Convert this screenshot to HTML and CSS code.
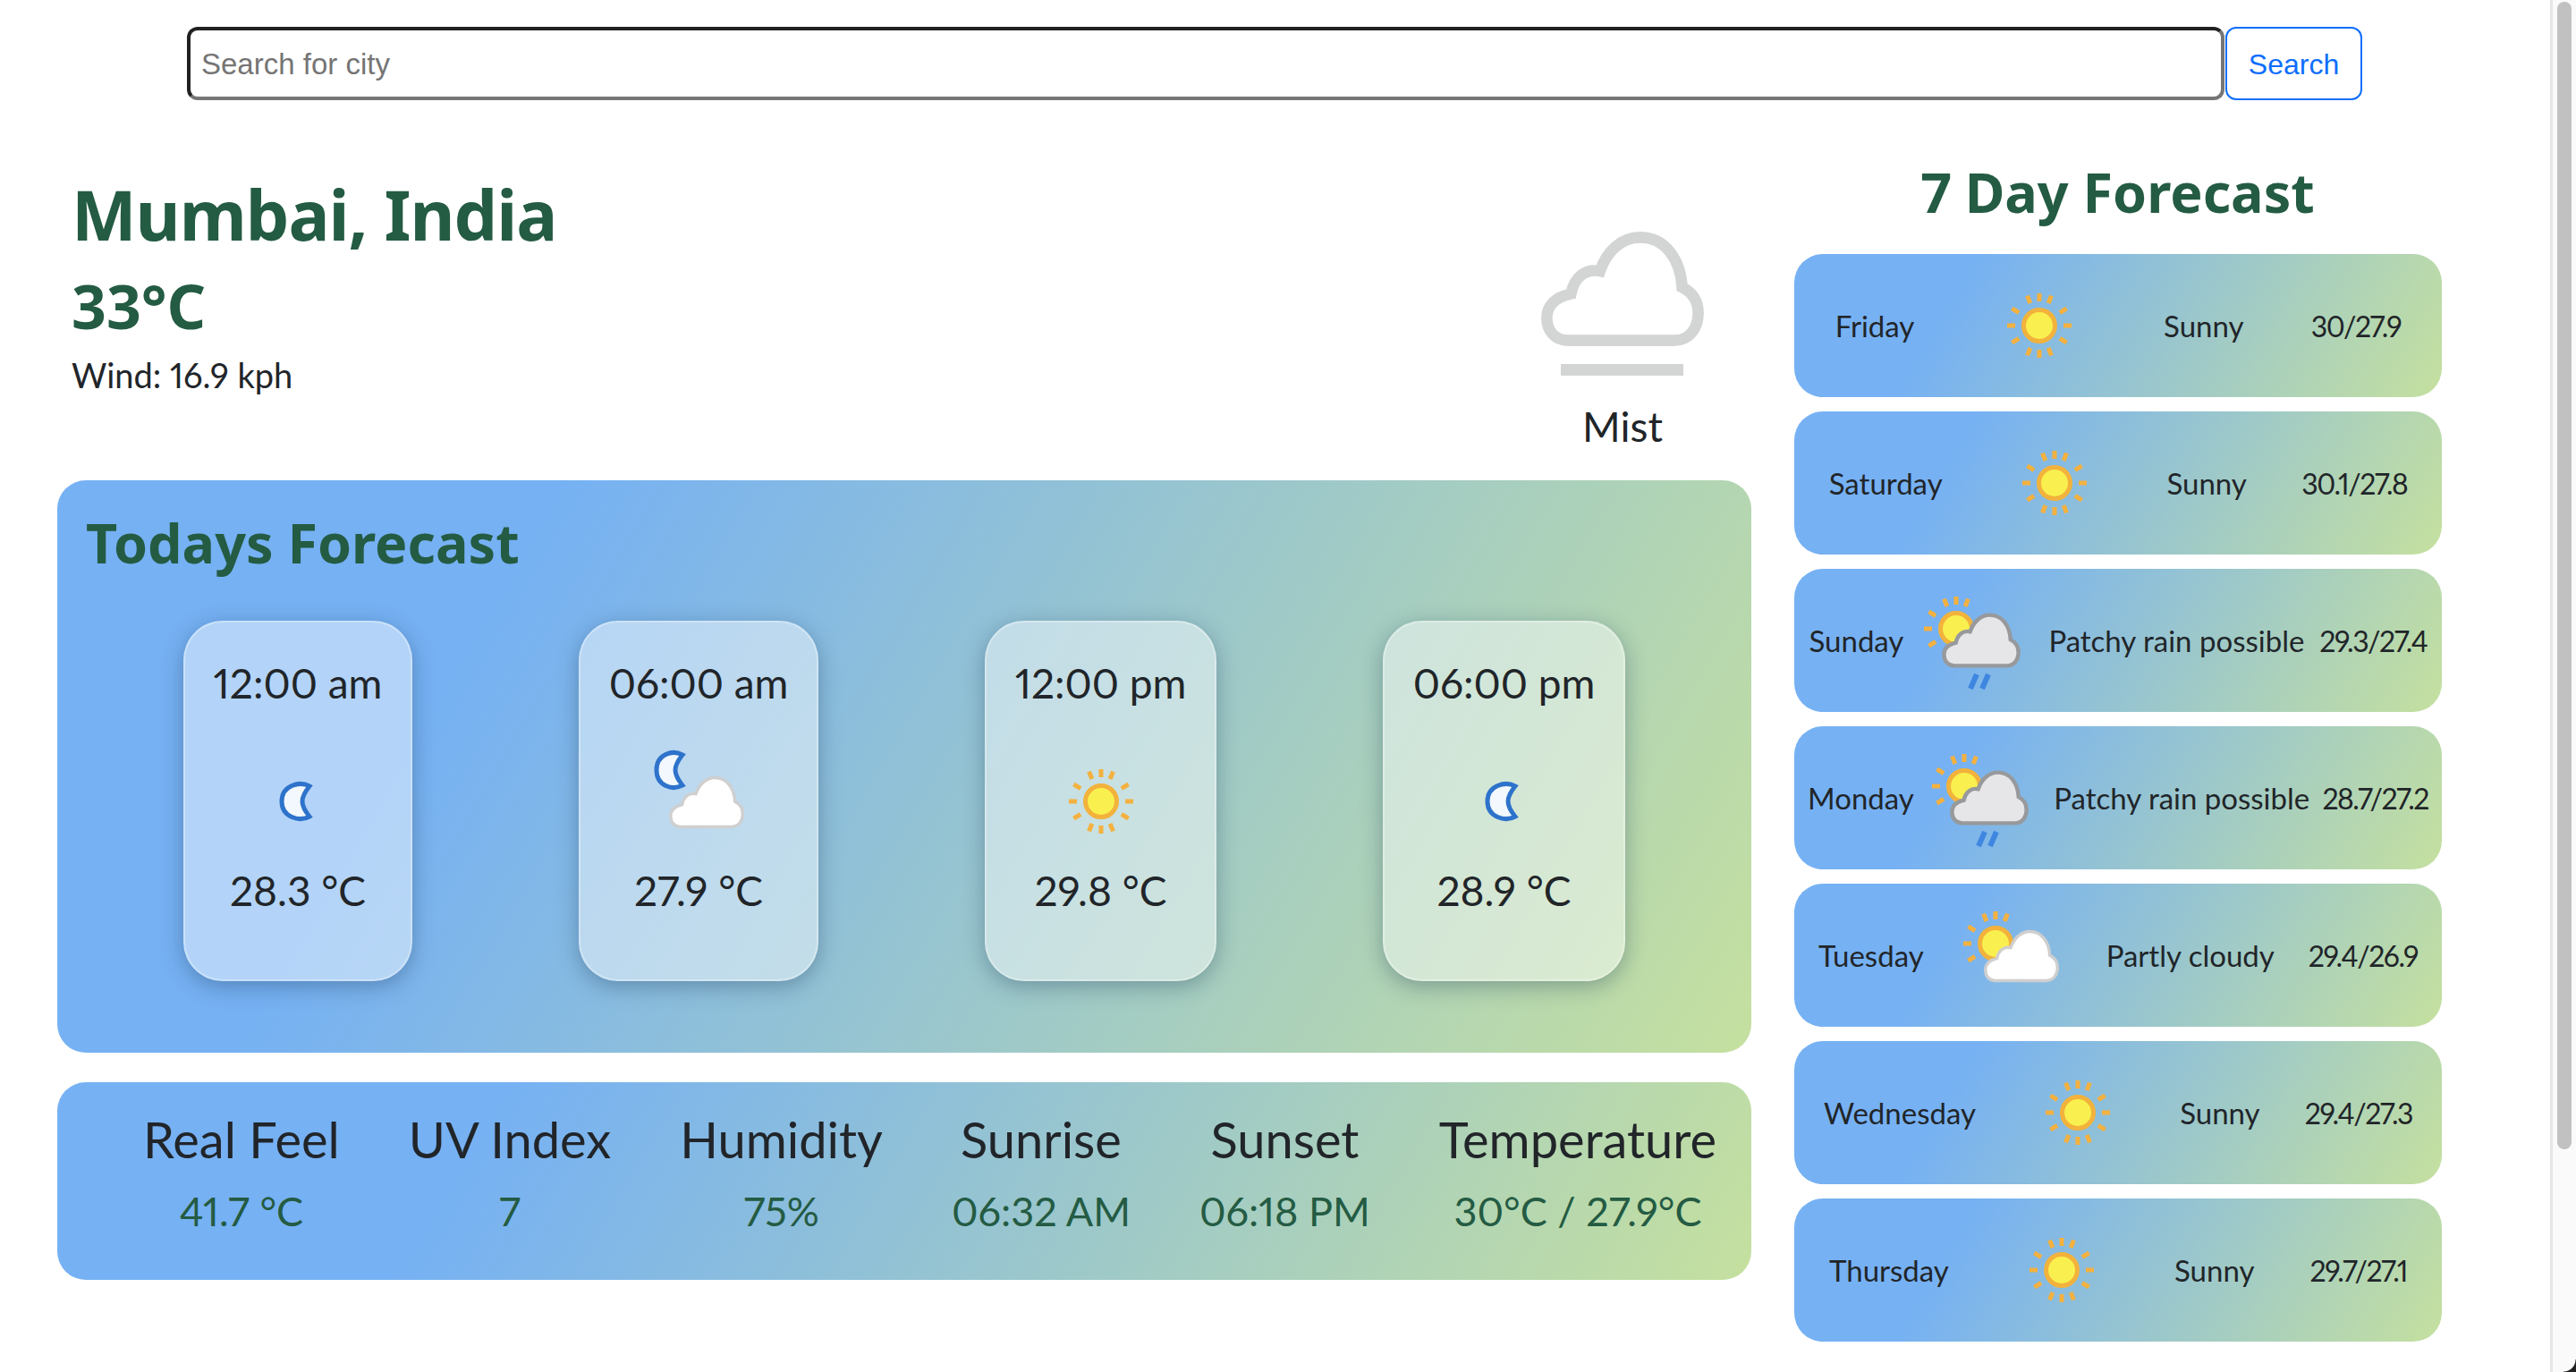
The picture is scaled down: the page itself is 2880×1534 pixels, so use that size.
FILE: index.html
```html
<!DOCTYPE html>
<html>

<head>
    <meta charset="utf-8">
    <title>Weather</title>
    <link rel="stylesheet" href="styles.css">
</head>

<body>
    <!-- shared weather icons -->
    <svg class="defs" aria-hidden="true">
        <symbol id="cloud-shape" viewBox="0 0 100 70" overflow="visible">
            <path d="M16 67 H82 C92 67 97 59 97 50 C97 42 93 37 87 34 C86 16 76 3 61 3 C49 3 40 12 36 24 C27 22 20 28 18 38 C9 40 3 45 3 53 C3 61 8 67 16 67 Z" />
        </symbol>
        <g id="ray"><line x1="64" y1="28" x2="64" y2="37" /></g>
        <symbol id="sun" viewBox="0 0 128 128">
            <g class="rays">
                <use href="#ray" />
                <use href="#ray" transform="rotate(22 64 64)" />
                <use href="#ray" transform="rotate(58 64 64)" />
                <use href="#ray" transform="rotate(90 64 64)" />
                <use href="#ray" transform="rotate(122 64 64)" />
                <use href="#ray" transform="rotate(158 64 64)" />
                <use href="#ray" transform="rotate(180 64 64)" />
                <use href="#ray" transform="rotate(202 64 64)" />
                <use href="#ray" transform="rotate(238 64 64)" />
                <use href="#ray" transform="rotate(270 64 64)" />
                <use href="#ray" transform="rotate(302 64 64)" />
                <use href="#ray" transform="rotate(338 64 64)" />
            </g>
            <circle class="sun-disc" cx="64" cy="64" r="17.5" />
        </symbol>
        <symbol id="moon" viewBox="0 0 128 128">
            <path class="moon-body" d="M77 47 C66 41 46 46 46 64 C46 82 66 87 77 81 C73 76 69 70 69 64 C69 58 73 52 77 47 Z" />
        </symbol>
        <symbol id="moon-cloud" viewBox="0 0 128 128">
            <path class="moon-body" d="M46 12 C35 6 17 11 17 29 C17 47 35 52 46 46 C42 41 38 35 38 29 C38 23 42 17 46 12 Z" />
            <use class="cloud-white" href="#cloud-shape" x="29" y="35" width="88" height="60" />
        </symbol>
        <symbol id="sun-cloud" viewBox="0 0 128 128">
            <g transform="translate(-22 -13)">
                <g class="rays">
                    <use href="#ray" />
                    <use href="#ray" transform="rotate(22 64 64)" />
                    <use href="#ray" transform="rotate(-22 64 64)" />
                    <use href="#ray" transform="rotate(-58 64 64)" />
                    <use href="#ray" transform="rotate(-90 64 64)" />
                    <use href="#ray" transform="rotate(-122 64 64)" />
                </g>
                <circle class="sun-disc" cx="64" cy="64" r="17.5" />
            </g>
            <use class="cloud-white" href="#cloud-shape" x="27" y="35" width="88" height="60" />
        </symbol>
        <symbol id="sun-rain" viewBox="0 0 128 128">
            <g transform="translate(-22 -13)">
                <g class="rays">
                    <use href="#ray" />
                    <use href="#ray" transform="rotate(22 64 64)" />
                    <use href="#ray" transform="rotate(-22 64 64)" />
                    <use href="#ray" transform="rotate(-58 64 64)" />
                    <use href="#ray" transform="rotate(-90 64 64)" />
                    <use href="#ray" transform="rotate(-122 64 64)" />
                </g>
                <circle class="sun-disc" cx="64" cy="64" r="17.5" />
            </g>
            <use class="cloud-grey" href="#cloud-shape" x="25" y="33" width="90" height="62" />
            <g class="rain">
                <line x1="65" y1="102" x2="58" y2="118" />
                <line x1="78" y1="102" x2="71" y2="118" />
            </g>
        </symbol>
    </svg>

    <form class="search-bar">
        <input class="search-input" type="text" placeholder="Search for city">
        <button class="search-btn" type="button">Search</button>
    </form>

    <main class="layout">
        <section class="left-col">
            <div class="now">
                <div class="now-info">
                    <h1 class="city">Mumbai, India</h1>
                    <h2 class="now-temp">33°C</h2>
                    <p class="wind">Wind: 16.9 kph</p>
                </div>
                <div class="now-cond">
                    <svg class="mist-icon" viewBox="0 0 256 256">
                        <use class="cloud-mist" href="#cloud-shape" x="38" y="46" width="180" height="126" />
                        <rect class="mist-bar" x="59" y="193" width="137" height="13" />
                    </svg>
                    <p class="cond-text">Mist</p>
                </div>
            </div>

            <div class="panel today">
                <h2 class="today-title">Todays Forecast</h2>
                <div class="hours">
                    <div class="hour-card">
                        <p class="hour-time">12:00 am</p>
                        <svg class="icon"><use href="#moon" /></svg>
                        <p class="hour-temp">28.3 °C</p>
                    </div>
                    <div class="hour-card">
                        <p class="hour-time">06:00 am</p>
                        <svg class="icon"><use href="#moon-cloud" /></svg>
                        <p class="hour-temp">27.9 °C</p>
                    </div>
                    <div class="hour-card">
                        <p class="hour-time">12:00 pm</p>
                        <svg class="icon"><use href="#sun" /></svg>
                        <p class="hour-temp">29.8 °C</p>
                    </div>
                    <div class="hour-card">
                        <p class="hour-time">06:00 pm</p>
                        <svg class="icon"><use href="#moon" /></svg>
                        <p class="hour-temp">28.9 °C</p>
                    </div>
                </div>
            </div>

            <div class="panel stats">
                <div class="stat"><p class="stat-label">Real Feel</p><p class="stat-value">41.7 °C</p></div>
                <div class="stat"><p class="stat-label">UV Index</p><p class="stat-value">7</p></div>
                <div class="stat"><p class="stat-label">Humidity</p><p class="stat-value">75%</p></div>
                <div class="stat"><p class="stat-label">Sunrise</p><p class="stat-value">06:32 AM</p></div>
                <div class="stat"><p class="stat-label">Sunset</p><p class="stat-value">06:18 PM</p></div>
                <div class="stat"><p class="stat-label">Temperature</p><p class="stat-value">30°C / 27.9°C</p></div>
            </div>
        </section>

        <section class="right-col">
            <h2 class="week-title">7 Day Forecast</h2>
            <div class="panel day">
                <span>Friday</span>
                <svg class="icon"><use href="#sun" /></svg>
                <span>Sunny</span>
                <span class="day-temp">30/27.9</span>
            </div>
            <div class="panel day">
                <span>Saturday</span>
                <svg class="icon"><use href="#sun" /></svg>
                <span>Sunny</span>
                <span class="day-temp">30.1/27.8</span>
            </div>
            <div class="panel day">
                <span>Sunday</span>
                <svg class="icon"><use href="#sun-rain" /></svg>
                <span>Patchy rain possible</span>
                <span class="day-temp">29.3/27.4</span>
            </div>
            <div class="panel day">
                <span>Monday</span>
                <svg class="icon"><use href="#sun-rain" /></svg>
                <span>Patchy rain possible</span>
                <span class="day-temp">28.7/27.2</span>
            </div>
            <div class="panel day">
                <span>Tuesday</span>
                <svg class="icon"><use href="#sun-cloud" /></svg>
                <span>Partly cloudy</span>
                <span class="day-temp">29.4/26.9</span>
            </div>
            <div class="panel day">
                <span>Wednesday</span>
                <svg class="icon"><use href="#sun" /></svg>
                <span>Sunny</span>
                <span class="day-temp">29.4/27.3</span>
            </div>
            <div class="panel day">
                <span>Thursday</span>
                <svg class="icon"><use href="#sun" /></svg>
                <span>Sunny</span>
                <span class="day-temp">29.7/27.1</span>
            </div>
        </section>
    </main>

    <div class="scrollbar"><div class="scroll-thumb"></div></div>
</body>

</html>
```

FILE: styles.css
```css
html,
body {
    margin: 0;
    padding: 0;
    height: 100%;
    overflow: hidden;
}

body {
    background: #fff;
    color: #212529;
    font-family: "Lato", "Noto Sans", sans-serif;
    font-variant-numeric: proportional-nums;
}

p,
h1,
h2 {
    margin: 0;
}

.defs {
    position: absolute;
    width: 0;
    height: 0;
}

/* search row */
.search-bar {
    display: flex;
    gap: 1px;
    height: 82px;
    margin: 30px 0 0 209px;
}

.search-input {
    width: 2278px;
    box-sizing: border-box;
    padding: 2px 12px 0;
    border: 4px solid;
    border-color: #212121 #767676 #767676 #212121;
    border-radius: 12px;
    background: #fff;
    font: 33px "Liberation Sans", sans-serif;
}

.search-input::placeholder {
    color: #757575;
}

.search-btn {
    width: 153px;
    padding: 2px 0 0;
    border: 2px solid #0d6efd;
    border-radius: 12px;
    background: #fff;
    color: #0d6efd;
    font: 32px "Liberation Sans", sans-serif;
}

/* page columns */
.layout {
    display: flex;
    gap: 48px;
    padding: 72px 0 0 64px;
}

.left-col {
    width: 1894px;
}

.right-col {
    width: 724px;
}

/* current weather */
.now {
    display: flex;
    justify-content: space-between;
    height: 353px;
    padding: 0 16px 0 16px;
    box-sizing: border-box;
}

.city,
.now-temp,
.today-title,
.week-title {
    font-family: "Noto Sans", sans-serif;
    font-weight: 700;
    color: #245b43;
}

.city {
    padding-top: 6px;
    font-size: 77px;
    line-height: 100px;
    letter-spacing: -1px;
}

.now-temp {
    margin-top: 10px;
    font-size: 68px;
    line-height: 84px;
}

.wind {
    margin-top: 11px;
    font-size: 38px;
    line-height: 48px;
}

.now-cond {
    margin-top: 30px;
    width: 256px;
    text-align: center;
}

.mist-icon {
    display: block;
    width: 256px;
    height: 256px;
}

.cloud-mist {
    fill: #fff;
    stroke: #d3d4d4;
    stroke-width: 7;
}

.mist-bar {
    fill: #d3d4d4;
}

.cond-text {
    margin-top: -21px;
    font-size: 46px;
    line-height: 56px;
}

/* gradient boxes */
.panel {
    border-radius: 32px;
    background: linear-gradient(120deg, #76b1f3 25%, #c5e09f 100%);
}

.today {
    height: 640px;
    padding: 32px 48px 0;
    box-sizing: border-box;
}

.today-title {
    margin-left: -16px;
    font-size: 61px;
    line-height: 76px;
}

.hours {
    display: flex;
    justify-content: space-around;
    margin-top: 49px;
}

.hour-card {
    display: flex;
    flex-direction: column;
    align-items: center;
    height: 403px;
    padding: 40px 32px 0;
    box-sizing: border-box;
    border: 2px solid rgba(255, 255, 255, 0.3);
    border-radius: 44px;
    background: rgba(255, 255, 255, 0.45);
    box-shadow: 0 6px 24px rgba(20, 50, 80, 0.35);
}

.hour-time {
    font-size: 46px;
    line-height: 56px;
    white-space: nowrap;
}

.hour-temp {
    font-size: 46px;
    line-height: 56px;
    margin-top: 8px;
    white-space: nowrap;
}

.icon {
    display: block;
    width: 128px;
    height: 128px;
    flex-shrink: 0;
}

.hour-card .icon {
    margin-top: 40px;
}

.rays {
    stroke: #f4b13f;
    stroke-width: 5;
    stroke-linecap: butt;
}

.sun-disc {
    fill: #f9f04f;
    stroke: #f2b23c;
    stroke-width: 5;
}

.moon-body {
    fill: #f2f8fd;
    stroke: #2e73cb;
    stroke-width: 5;
}

.cloud-white {
    fill: #fff;
    stroke: #cfcfcf;
    stroke-width: 4;
}

.cloud-grey {
    fill: #e6e6e9;
    stroke: #97999c;
    stroke-width: 5;
}

.rain {
    stroke: #3f86e0;
    stroke-width: 6;
}

/* bottom stats */
.stats {
    display: flex;
    gap: 77px;
    height: 221px;
    margin-top: 33px;
    padding: 30px 0 0 96px;
    box-sizing: border-box;
}

.stat {
    flex-shrink: 0;
    text-align: center;
    white-space: nowrap;
}

.stat-label {
    font-size: 56px;
    line-height: 68px;
}

.stat-value {
    margin-top: 16px;
    font-size: 45px;
    line-height: 60px;
    color: #245b43;
}

/* 7 day list */
.week-title {
    height: 100px;
    font-size: 61px;
    line-height: 62px;
    text-align: center;
}

.day {
    display: flex;
    justify-content: space-around;
    align-items: center;
    height: 160px;
    margin-bottom: 16px;
    padding: 0 8px;
    font-size: 33px;
    white-space: nowrap;
}

.day-temp {
    font-size: 32px;
    letter-spacing: -1.5px;
}

/* window scrollbar drawn over the page */
.scrollbar {
    position: fixed;
    top: 0;
    right: 0;
    bottom: 0;
    width: 26px;
    border-left: 3px solid #e6e6e6;
    background: #fafafa;
}

.scrollbar::after {
    content: "";
    position: absolute;
    right: 0;
    bottom: 0;
    width: 14px;
    height: 14px;
    background: radial-gradient(circle at 0 0, transparent 13px, #222 14px);
}

.scroll-thumb {
    width: 16px;
    height: 1283px;
    margin: 2px 0 0 5px;
    border-radius: 8px;
    background: #c1c1c1;
}
```
